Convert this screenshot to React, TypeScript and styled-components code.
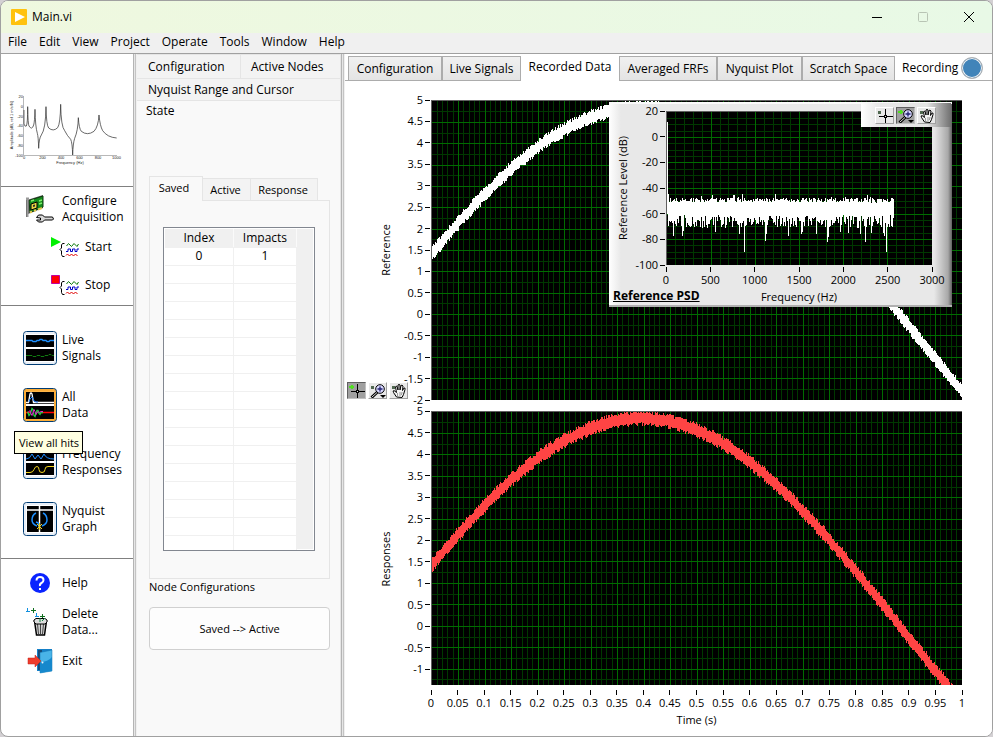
import React from "react";
import styled, { createGlobalStyle, css } from "styled-components";

const GlobalStyle = createGlobalStyle`
  *, *::before, *::after { box-sizing: border-box; }
  body { margin: 0; background: #d3d0d3; color: #000; font: 12px/16px "Open Sans", "Noto Sans", sans-serif; }
  button { font: inherit; color: inherit; padding: 0; margin: 0; border: 0; background: none; }
  svg { display: block; }
`;

/* ---------- window frame ---------- */

const AppWindow = styled.div`
  display: flex;
  flex-direction: column;
  min-height: 100vh;
  border: 1px solid #a0a0a0;
  border-radius: 8px;
  background: #fff;
  overflow: hidden;
`;

const TitleBar = styled.header`
  display: flex;
  align-items: center;
  height: 32px;
  padding-left: 10px;
  background: linear-gradient(90deg, #eff8df, #e8f9e6);
`;

const Title = styled.h1`
  flex: 1;
  margin: 0 0 0 5px;
  font-size: 12px;
  font-weight: 400;
`;

const CaptionButton = styled.button`
  display: grid;
  place-items: center;
  width: 46px;
  height: 32px;
`;

const MenuBar = styled.nav`
  display: flex;
  gap: 12px;
  height: 21px;
  padding: 0 7px 2px;
  background: #f0f0f0;
  border-bottom: 1px solid #a0a0a0;
`;

const Workspace = styled.div`
  display: grid;
  grid-template-columns: 132px 4px 204px 4px minmax(0, 1fr);
  flex: 1;
`;

const Splitter = styled.div`
  background: linear-gradient(90deg, #b4b4b4 1px, #e6e6e6 1px 2px, #c4c4c4 2px 3px, #f0f0f0 3px);
`;

/* ---------- sidebar ---------- */

const Sidebar = styled.aside`
  display: flex;
  flex-direction: column;
  font-size: 12px;
`;

const LogoArea = styled.div`
  height: 133px;
  padding-top: 37px;
  border-bottom: 1px solid #808080;
`;

const SideGroup = styled.div<{ $top: number; $bottom: number; $gap: number }>`
  display: flex;
  flex-direction: column;
  gap: ${(p) => p.$gap}px;
  padding: ${(p) => p.$top}px 0 ${(p) => p.$bottom}px;
  & + & { border-top: 1px solid #808080; }
`;

const SideItem = styled.div<{ $indent?: boolean }>`
  position: relative;
  padding-left: ${(p) => (p.$indent ? 49 : 22)}px;
`;

const SideButton = styled.button<{ $indent?: boolean }>`
  display: grid;
  grid-template-columns: ${(p) => (p.$indent ? "28px" : "34px")} auto;
  align-items: center;
  justify-content: start;
  column-gap: ${(p) => (p.$indent ? 7 : 5)}px;
  min-height: 34px;
  text-align: left;
  white-space: pre;
`;

const IconSlot = styled.span`
  display: grid;
  place-items: center;
`;

const Tooltip = styled.div`
  position: absolute;
  z-index: 2;
  left: 13px;
  top: 43px;
  padding: 3px 3px 2px 4px;
  border: 1px solid #000;
  background: #ffffe1;
  font-size: 11px;
  white-space: nowrap;
`;

/* ---------- state panel ---------- */

const StatePanel = styled.section`
  display: flex;
  flex-direction: column;
  background: #f9f9f9;
  border-right: 1px solid #e5e5e5;
`;

const TabRow = styled.div`
  display: flex;
  background: #f3f3f3;
  border-top: 1px solid #e5e5e5;
`;

const SoftTab = styled.button<{ $w: number; $h: number }>`
  width: ${(p) => p.$w}px;
  height: ${(p) => p.$h}px;
  padding-left: 11px;
  text-align: left;
  white-space: nowrap;
  & + & { border-left: 1px solid #e5e5e5; padding-left: 10px; }
`;

const ActiveSoftTab = styled.button`
  height: 23px;
  padding: 0 0 2px 9px;
  border-top: 1px solid #e5e5e5;
  background: #f9f9f9;
  text-align: left;
`;

const StateBody = styled.div`
  display: flex;
  flex-direction: column;
  padding: 53px 10px 0 12px;
  font-size: 11px;
`;

const SmallTabs = styled.div`
  display: flex;
  align-items: flex-end;
`;

const SmallTab = styled.button<{ $w: number; $active?: boolean }>`
  width: ${(p) => p.$w}px;
  height: 22px;
  border: 1px solid #e5e5e5;
  border-left-width: 0;
  border-bottom: 0;
  padding-right: 2px;
  background: #f3f3f3;
  ${(p) =>
    p.$active &&
    css`
      height: 25px;
      margin-bottom: -1px;
      padding: 0 4px 3px 0;
      border-left-width: 1px;
      background: #f9f9f9;
      position: relative;
    `}
`;

const TableFrame = styled.div`
  height: 379px;
  padding: 26px 14px 0 13px;
  border: 1px solid #e5e5e5;
`;

const TableBox = styled.div`
  display: flex;
  height: 324px;
  padding: 1px;
  border: 1px solid #828790;
  background: #fff;
  overflow: hidden;
`;

const Table = styled.table`
  flex: 1;
  border-collapse: collapse;
  table-layout: fixed;
  font-size: 12px;
  th, td {
    height: 18px;
    padding: 0;
    font-weight: 400;
    line-height: 16px;
    text-align: center;
    border-bottom: 1px solid #f0f0f0;
    border-right: 1px solid #f0f0f0;
  }
  th { background: #f0f0f0; border-right-color: #fafafa; }
`;

const IndexColumn = styled.col`
  width: 52%;
`;

const ScrollTrack = styled.div`
  width: 16px;
  background: #f0f0f0;
`;

const Caption = styled.div`
  height: 28px;
`;

const PushButton = styled.button`
  height: 43px;
  border: 1px solid #d0d0d0;
  border-radius: 4px;
  background: #fdfdfd;
`;

/* ---------- main tabs ---------- */

const DataPanel = styled.main`
  display: flex;
  flex-direction: column;
  min-width: 0;
  background: #fff;
`;

const MainTabs = styled.div`
  display: flex;
  align-items: flex-end;
  height: 27px;
  padding-left: 3px;
  background: linear-gradient(#acacac, #acacac) 0 100% / 100% 1px no-repeat;
`;

const MainTab = styled.button<{ $w: number; $active?: boolean }>`
  width: ${(p) => p.$w}px;
  height: 25px;
  border: 1px solid #acacac;
  background: linear-gradient(#f0f0f0, #e4e4e4);
  white-space: nowrap;
  ${(p) =>
    p.$active &&
    css`
      height: 27px;
      border: 0;
      padding-bottom: 2px;
      background: #fff;
    `}
`;

const RecordingStatus = styled.div`
  display: flex;
  align-items: center;
  gap: 3px;
  height: 27px;
  padding-left: 7px;
`;

const Lamp = styled.span`
  width: 22px;
  height: 22px;
  border: 1px solid #b4b4b4;
  border-radius: 50%;
  background: #4184b9;
  box-shadow: inset 0 0 0 1px #f4f4f4;
`;

/* ---------- plots ---------- */

const PlotArea = styled.div`
  display: grid;
  grid-template-columns: 86px minmax(0, 1fr);
  grid-template-rows: minmax(0, 300fr) 11px minmax(0, 274fr) 51px;
  flex: 1;
  padding: 19px 30px 0 0;
`;

const AxisColumn = styled.div`
  grid-column: 1;
  position: relative;
`;

const AxisSvg = styled.svg`
  width: 100%;
  height: 100%;
  overflow: visible;
  font-size: 11px;
`;

const Palette = styled.div`
  position: absolute;
  left: 2px;
  bottom: 1px;
  display: flex;
  gap: 2px;
`;

const PlotCell = styled.div<{ $row: number }>`
  grid-column: 2;
  grid-row: ${(p) => p.$row};
  position: relative;
  background: #000;
  border-top: 1px solid #606060;
  border-left: 1px solid #606060;
  & > svg { position: absolute; inset: 0; width: 100%; height: 100%; }
`;

const TimeAxis = styled.div`
  grid-column: 2;
  grid-row: 4;
`;

const ToolButton = styled.button<{ $on?: boolean }>`
  width: 19px;
  height: 17px;
  background: ${(p) => (p.$on ? "#a0a0a0" : "#e8e8e8")};
  border: 1px solid;
  border-color: ${(p) => (p.$on ? "#606060 #c0c0c0 #c0c0c0 #606060" : "#fff #a0a0a0 #a0a0a0 #fff")};
`;

const Inset = styled.section`
  position: absolute;
  right: 10px;
  top: 1px;
  width: 343px;
  height: 205px;
  display: grid;
  grid-template-columns: 57px 1fr 20px;
  grid-template-rows: 9px 154px 1fr;
  background: linear-gradient(90deg, #fff, #e8e8e8 12px, #e8e8e8 325px, #a8a8a8 339px, #606060 343px);
  border-bottom: 2px solid #b0b0b0;
  box-shadow: inset 0 2px #fafafa;
`;

const InsetAxis = styled.div`
  grid-column: 1;
  grid-row: 2;
`;

const InsetPlot = styled.div`
  grid-column: 2;
  grid-row: 2;
  position: relative;
  background: #000;
  border-top: 1px solid #606060;
  border-left: 1px solid #606060;
  & > svg { position: absolute; inset: 0; width: 100%; height: 100%; }
`;

const InsetFoot = styled.div`
  grid-column: 2;
  grid-row: 3;
`;

const InsetTitle = styled.h2`
  position: absolute;
  left: 4px;
  bottom: 1px;
  margin: 0;
  font-size: 12px;
  line-height: 16px;
  text-decoration: underline;
`;

const InsetTools = styled.div`
  position: absolute;
  right: 1px;
  top: 1px;
  display: flex;
  gap: 2px;
  width: 90px;
  height: 24px;
  padding: 4px 0 0 14px;
  background: linear-gradient(90deg, #fff, #e8e8e8 16px, #e4e4e4 66px, #707070);
`;

/* ---------- data ---------- */

function makeNoise(seed: number) {
  let s = seed;
  return () => {
    s = (s * 1103515245 + 12345) % 2147483648;
    return s / 2147483648;
  };
}

const SAMPLES = 530;

function bandPath(seed: number, yMin: number, yMax: number, height: number) {
  const noise = makeNoise(seed);
  const toY = (v: number) => ((yMax - v) / (yMax - yMin)) * height;
  const signal = (t: number) => 4.85 * Math.cos(3.22 * (t - 0.395));
  let d = "";
  for (let i = 0; i < SAMPLES; i++) {
    const a = signal(i / SAMPLES);
    const b = signal((i + 1) / SAMPLES);
    const top = toY(Math.max(a, b) + 0.09 + noise() * 0.09);
    const bottom = toY(Math.min(a, b) - 0.09 - noise() * 0.09);
    d += `M${i} ${top.toFixed(1)}h1V${bottom.toFixed(1)}h-1z`;
  }
  return d;
}

const DIPS: Record<number, number> = {
  6: 77, 15: 77, 16: 73, 48: 74, 72: 76, 77: 90, 98: 81, 99: 76, 121: 77, 135: 76, 136: 74,
  150: 76, 161: 82, 162: 78, 174: 74, 182: 75, 194: 76, 199: 82, 205: 75, 217: 75, 218: 77, 220: 90,
};

function psdPath() {
  const noise = makeNoise(77);
  const toY = (v: number) => ((20 - v) / 120) * 153;
  let d = `M0 ${toY(12)}h1V${toY(-60)}h-1zM1 ${toY(-44)}h1V${toY(-66)}h-1z`;
  for (let i = 1; i < 228; i++) {
    const n = noise();
    const top = -47 - noise() * 4 + (n > 0.93 ? 3 : 0);
    const low = noise();
    const bottom = DIPS[i] ? -DIPS[i] : -61 - low * 10;
    d += `M${i} ${toY(top).toFixed(1)}h1V${toY(bottom).toFixed(1)}h-1z`;
  }
  return d;
}

const refBand = bandPath(11, -2, 5, 299);
const respBand = bandPath(29, -1.37, 5, 273);
const psdBand = psdPath();

const range = (from: number, to: number, step: number) =>
  Array.from({ length: Math.round((to - from) / step) + 1 }, (_, i) => Number((from + i * step).toFixed(4)));

/* ---------- chart parts ---------- */

type Scale = { min: number; max: number };
const pct = (v: number) => `${v.toFixed(3)}%`;
const along = (v: number, s: Scale) => ((v - s.min) / (s.max - s.min)) * 100;

function Grid({ x, y, xStep, yStep, xMinor, yMinor }: { x: Scale; y: Scale; xStep: number; yStep: number; xMinor: number; yMinor: number }) {
  const isMajor = (v: number, step: number) => Math.abs(v / step - Math.round(v / step)) < 0.01;
  const firstY = Math.ceil(y.min / yMinor) * yMinor;
  const xs = range(x.min, x.max, xMinor);
  const ys = range(firstY, y.max, yMinor);
  const layer = (major: boolean) => (
    <g stroke={major ? "#006c00" : "#003800"}>
      {xs.filter((v) => isMajor(v, xStep) === major && v > x.min && v < x.max).map((v) => (
        <line key={`x${v}`} x1={pct(along(v, x))} x2={pct(along(v, x))} y1="0" y2="100%" />
      ))}
      {ys.filter((v) => isMajor(v, yStep) === major && v < y.max && v > y.min).map((v) => (
        <line key={`y${v}`} y1={pct(100 - along(v, y))} y2={pct(100 - along(v, y))} x1="0" x2="100%" />
      ))}
    </g>
  );
  return (
    <svg shapeRendering="crispEdges">
      {layer(false)}
      {layer(true)}
    </svg>
  );
}

function Trace({ d, color, w, h }: { d: string; color: string; w: number; h: number }) {
  return (
    <svg viewBox={`0 0 ${w} ${h}`} preserveAspectRatio="none" shapeRendering="crispEdges">
      <path d={d} fill={color} />
    </svg>
  );
}

function ValueAxis({ values, scale, width, label, labelX, labelY }: { values: number[]; scale: Scale; width: number; label: string; labelX: number; labelY: string }) {
  return (
    <AxisSvg>
      {values.map((v) => {
        const y = pct(100 - along(v, scale));
        return (
          <g key={v}>
            <line x1={width - 6} x2={width - 1} y1={y} y2={y} stroke="#000" shapeRendering="crispEdges" />
            <text x={width - 8} y={y} dy="4" textAnchor="end">{v}</text>
          </g>
        );
      })}
      <svg x={labelX} y={labelY} overflow="visible">
        <text transform="rotate(-90)" textAnchor="middle">{label}</text>
      </svg>
    </AxisSvg>
  );
}

function BottomAxis({ values, scale, tickTop, textY, label, labelX, labelY }: { values: number[]; scale: Scale; tickTop: number; textY: number; label: string; labelX: string; labelY: number }) {
  return (
    <AxisSvg>
      {values.map((v) => {
        const x = pct(along(v, scale));
        return (
          <g key={v}>
            <line x1={x} x2={x} y1={tickTop} y2={tickTop + 5} stroke="#000" shapeRendering="crispEdges" />
            <text x={x} y={textY} textAnchor="middle">{v}</text>
          </g>
        );
      })}
      <text x={labelX} y={labelY} textAnchor="middle">{label}</text>
    </AxisSvg>
  );
}

/* ---------- icons ---------- */

const CursorIcon = ({ on }: { on?: boolean }) => (
  <svg width="17" height="15" shapeRendering="crispEdges">
    <path d={on ? "M1 3h5v2h-5zM3 2h2v4h-2z" : "M2 3h3v3h-3z"} fill={on ? "#50e020" : "#506850"} />
    <path d="M9.500 1v14M3 8.500h14" stroke="#000" fill="none" />
    <path d="M8 7h3v3h-3z" fill="#000" />
    <path d="M9 8h1v1h-1z" fill="#ddd" />
  </svg>
);

const ZoomIcon = ({ on }: { on?: boolean }) => (
  <svg width="17" height="15">
    <path d={on ? "M1 3h5v2h-5zM3 2h2v4h-2z" : "M2 3h3v3h-3z"} fill={on ? "#50e020" : "#506850"} />
    <path d="M8.500 9L2.500 14.500" stroke="#000" strokeWidth="3" />
    <path d="M8 9.500L3 14" stroke="#ddd" />
    <circle cx="11" cy="6" r="4.300" fill="#d8d8ff" stroke="#000" />
    <path d="M8.500 6h5M11 3.500v5" stroke="#202070" strokeWidth="1.300" />
    <path d="M11 12h6l-3 3z" fill="#000" />
  </svg>
);

const HandIcon = () => (
  <svg width="17" height="15">
    <path d="M2 3h3v3h-3z" fill="#506850" />
    <path
      d="M6.500 14L3.500 9.500Q2.500 7.500 4 7.500L6.500 9.500L5.500 4Q6 2.500 7 3.500L8 7V2Q9 .800 10 2V7L11 2.500Q12 1.500 13 3L12.500 7.500L14 5Q15.500 4.500 15 6.500L13.500 11.500L12 14.500z"
      fill="#f4f4f4" stroke="#000" strokeWidth="1"
    />
    <path d="M7.500 10v3M10 9v4M12 9l-.500 3" stroke="#999" />
  </svg>
);

const AppIcon = () => (
  <svg width="16" height="16">
    <rect width="16" height="16" rx="1" fill="#ffc20e" />
    <path d="M4 3v10l10-5z" fill="#fff" />
  </svg>
);

const BoardIcon = () => (
  <svg width="30" height="28" viewBox="0 0 30 28">
    <path d="M2 5L18 0V13L3 19V22H1V4z" fill="#555" />
    <path d="M4 5.500L18 1V12L5 17.500z" fill="#158a1c" stroke="#103b10" />
    <path d="M1 3.500h3M2.500 4v18" stroke="#999" strokeWidth="2" />
    <path d="M6 9l6-2v6l-6 2z" fill="#e5d340" stroke="#000" />
    <path d="M8 10l2-.500v2l-2 .500z" fill="#333" />
    <path d="M14 6l3-1M14 9l3-1M6 6l3-1" stroke="#7ef06a" strokeWidth="1.500" />
    <path d="M5 17.500l2-1M9 16l2-1M13 14.500l4-1.500" stroke="#e0c850" strokeWidth="2" />
    <path d="M11.500 22.500l2-2.500h4l2 2h8l1 2-1 1h-8l-2 2h-4l-2-2h4v-2z" fill="#d8d8d8" stroke="#000" />
  </svg>
);

const WaveBundle = () => (
  <>
    <path d="M14.500 6.500H12.500L11.500 8V11L10 12.500L11.500 14V17.500L12.500 19.500H14.500" fill="none" stroke="#000" />
    <path d="M16.500 9l2-2.500 3 3 2.500-3 3 3 1.500-2.500" fill="none" stroke="#087808" />
    <path d="M16 14.500h2v-2.500h2.500v2.500h2v-2.500h2.500v2.500h2v-2.500h2" fill="none" stroke="#0000c8" />
    <path d="M16 18.500l1.500-1.500 2 2 2-2 2 2 2-2 2 2" fill="none" stroke="#e00000" />
  </>
);

const StartIcon = () => (
  <svg width="30" height="21">
    <path d="M1 0l10 5-10 5z" fill="#00f000" />
    <WaveBundle />
  </svg>
);

const StopIcon = () => (
  <svg width="30" height="21">
    <path d="M1.500.500h8v8h-8z" fill="#f00" stroke="#c000a0" />
    <WaveBundle />
  </svg>
);

function ScreenIcon({ hot, children }: { hot?: boolean; children: React.ReactNode }) {
  return (
    <svg width="34" height="34">
      <rect x=".5" y=".5" width="33" height="33" rx="3" fill={hot ? "#ffb648" : "#fff"} stroke="#003c74" />
      <rect x="2" y="2" width="30" height="30" rx="1" fill="none" stroke={hot ? "#f5a32a" : "#d4e0f0"} />
      {children}
    </svg>
  );
}

const LiveIcon = () => (
  <ScreenIcon>
    <path d="M3 4h28v12H3zM3 18h28v12H3z" fill="#000" />
    <path d="M3 9.500h6l1 1h3l1-1h2l1-1h2l1 1h3l1 1h2l1-1h4" fill="none" stroke="#1e90ff" strokeWidth="1.300" />
    <path d="M3 24.500h6l1 1h3l1-1h3l1 1h3l1-1h3l1-1h2l1 1h2" fill="none" stroke="#107a10" />
  </ScreenIcon>
);

const AllDataIcon = () => (
  <ScreenIcon hot>
    <path d="M3 4h28v12H3zM3 18h28v13H3z" fill="#000" />
    <path d="M3 14.500h2.500L7 6q1-2 2 0l1.500 8.500H31" fill="none" stroke="#fff" strokeWidth="1.300" />
    <path d="M6 14l1-3 2-2 2 4 2 1h2" fill="none" stroke="#2080ff" />
    <path d="M3 24.500h4M18 24.500h13" stroke="#f00" strokeWidth="1.500" />
    <path d="M4 24.500h1l1 3 1-1 2-6 1 1 1 6 1 1 2-6h1l1 3 1 1 1-2h2" fill="none" stroke="#20d040" strokeWidth="1.300" />
    <path d="M5 24.500l2-2 1 3 1 2 2-6 1 2 1 3 2-3 1 1 2-1h2" fill="none" stroke="#e020d0" />
    <path d="M3 17h28" stroke="#fff" strokeWidth="2" />
  </ScreenIcon>
);

const FrequencyIcon = () => (
  <ScreenIcon>
    <path d="M3 3h28v13H3zM3 18h28v12H3z" fill="#000" />
    <path d="M3 14q4 0 6-5l3 5 3-4 3 4 3-5q2 5 10 5" fill="none" stroke="#1e90ff" />
    <path d="M3 27.500h4q3 0 4-3t3-3 2 3 3 3 3-3 3-3h6" fill="none" stroke="#f4d420" />
  </ScreenIcon>
);

const NyquistIcon = () => (
  <ScreenIcon>
    <path d="M4 4h26v26H4z" fill="#000" />
    <path d="M4 8h26M16.500 4v26" stroke="#fff" strokeWidth="1.500" />
    <path d="M13 11q-4 2-4 7 0 4 5 6M20 11q4 2 4 7 0 4-5 6M13 20q4 1 3 5" fill="none" stroke="#1e90ff" strokeWidth="1.500" />
    <path d="M14 22l5 5M19 22l-5 5M16.500 21v7" stroke="#f4d420" />
  </ScreenIcon>
);

const HelpIcon = () => (
  <svg width="22" height="22">
    <circle cx="11" cy="11" r="10" fill="#0a24ff" />
    <path d="M7.500 8.500q0-3.500 3.500-3.500t3.500 3q0 2-2 3T11 14" fill="none" stroke="#fff" strokeWidth="2" />
    <path d="M10 16h2v2h-2z" fill="#fff" />
  </svg>
);

const DeleteIcon = () => (
  <svg width="28" height="30">
    <path d="M1.500 1v4M0 4.500h4M10.500 6v4M9 9.500h4M14.500 14v4M12 16.500h4" stroke="#1090e0" />
    <path d="M5 3.500h5M7.500 1v5M14 9.500h5M16.500 7v5M15 14.500h4" stroke="#107020" />
    <path d="M8.500 14l2 14h8l2-14z" fill="#d0d0d0" stroke="#000" strokeWidth="1.500" />
    <path d="M11.500 17l1 10M14.500 17v10M17.500 17l-1 10" stroke="#444" />
    <path d="M8 13l2-1.500h9l2 1.500v2l-2 2h-9l-2-2z" fill="#ddd" stroke="#000" />
    <path d="M14 11v4M16 14l3-3" stroke="#108040" />
  </svg>
);

const ExitIcon = () => (
  <svg width="26" height="26">
    <path d="M10 1h15v22H10z" fill="#1580c8" />
    <path d="M11 2h4v20h-4z" fill="#174c78" />
    <path d="M13 4.500L25 2V23l-12 2z" fill="#49b4e8" stroke="#1270ac" strokeWidth=".5" />
    <path d="M13 14q8 0 12-5v14l-12 2z" fill="#1688cc" />
    <path d="M1 10h7V7l6 6-6 6v-3H1z" fill="#ef3c2b" stroke="#c02018" strokeWidth=".5" />
    <circle cx="15.500" cy="14.500" r="1" fill="#e8f4fc" />
  </svg>
);

const LogoChart = () => (
  <svg width="131" height="74" viewBox="1 91 131 74" fontSize="4" fontFamily="Liberation Sans, sans-serif" fill="#222">
    <path d="M23.500 96v59.500H117" fill="none" stroke="#999" strokeWidth=".7" />
    <path
      transform="scale(.33333)"
      d="M72 330V372Q75 382 79 378Q83 372 83 320Q84 374 87 378Q96 392 101 375Q104 366 105 328Q106 380 112 400Q115 410 116 445Q117 415 124 405Q137 388 138 320Q139 376 146 384Q160 396 173 383Q181 372 182 313Q183 380 194 392Q202 408 212 418Q217 428 218 465Q219 430 224 415Q234 392 235 353Q237 386 244 394Q262 408 282 394Q295 380 297 345Q300 378 308 392Q322 412 350 414"
      fill="none" stroke="#333" strokeWidth="2.200"
    />
    {[20, 0, -20, -40, -60, -80, -100].map((v, i) => (
      <text key={v} x="23" y={98 + i * 9.8} textAnchor="end">{v}</text>
    ))}
    {[0, 200, 400, 600, 800, 1000].map((v, i) => (
      <text key={v} x={24 + i * 18.5} y="159" textAnchor="middle">{v}</text>
    ))}
    <text x="70" y="164" textAnchor="middle">Frequency (Hz)</text>
    <text transform="translate(13 125) rotate(-90)" textAnchor="middle">Amplitude (dB, ref 1 m/s/N)</text>
  </svg>
);

/* ---------- page ---------- */

const menuItems = ["File", "Edit", "View", "Project", "Operate", "Tools", "Window", "Help"];

const MenuItem = styled.button`
  display: block;
`;

type SideEntry = { label: string; icon: React.ReactNode; indent?: boolean; tip?: string };
type SideBlock = { top: number; bottom: number; gap: number; items: SideEntry[] };

const sideBlocks: SideBlock[] = [
  {
    top: 5, bottom: 3, gap: 4,
    items: [
      { label: "Configure\nAcquisition", icon: <BoardIcon /> },
      { label: "Start", icon: <StartIcon />, indent: true },
      { label: "Stop", icon: <StopIcon />, indent: true },
    ],
  },
  {
    top: 25, bottom: 22, gap: 23,
    items: [
      { label: "Live\nSignals", icon: <LiveIcon /> },
      { label: "All\nData", icon: <AllDataIcon />, tip: "View all hits" },
      { label: "Frequency\nResponses", icon: <FrequencyIcon /> },
      { label: "Nyquist\nGraph", icon: <NyquistIcon /> },
    ],
  },
  {
    top: 7, bottom: 0, gap: 5,
    items: [
      { label: "Help", icon: <HelpIcon /> },
      { label: "Delete\nData...", icon: <DeleteIcon /> },
      { label: "Exit", icon: <ExitIcon /> },
    ],
  },
];

const timeScale = { min: 0, max: 1 };
const refScale = { min: -2, max: 5 };
const respScale = { min: -1.37, max: 5 };
const freqScale = { min: 0, max: 3000 };
const levelScale = { min: -100, max: 20 };

export default function App() {
  return (
    <>
      <GlobalStyle />
      <AppWindow>
        <TitleBar>
          <AppIcon />
          <Title>Main.vi</Title>
          <CaptionButton aria-label="Minimize">
            <svg width="10" height="10" shapeRendering="crispEdges"><path d="M0 5.500h10" stroke="#000" /></svg>
          </CaptionButton>
          <CaptionButton aria-label="Maximize" disabled>
            <svg width="10" height="10"><rect x=".5" y=".5" width="9" height="9" rx="1" fill="none" stroke="#b8c4b4" /></svg>
          </CaptionButton>
          <CaptionButton aria-label="Close">
            <svg width="10" height="10"><path d="M0 0l10 10M10 0L0 10" stroke="#000" /></svg>
          </CaptionButton>
        </TitleBar>
        <MenuBar>
          {menuItems.map((m) => <MenuItem key={m}>{m}</MenuItem>)}
        </MenuBar>
        <Workspace>
          <Sidebar>
            <LogoArea><LogoChart /></LogoArea>
            {sideBlocks.map((b, i) => (
              <SideGroup key={i} $top={b.top} $bottom={b.bottom} $gap={b.gap}>
                {b.items.map((it) => (
                  <SideItem key={it.label} $indent={it.indent}>
                    <SideButton $indent={it.indent}>
                      <IconSlot>{it.icon}</IconSlot>
                      {it.label}
                    </SideButton>
                    {it.tip && <Tooltip role="tooltip">{it.tip}</Tooltip>}
                  </SideItem>
                ))}
              </SideGroup>
            ))}
          </Sidebar>
          <Splitter />
          <StatePanel>
            <TabRow>
              <SoftTab $w={103} $h={23}>Configuration</SoftTab>
              <SoftTab $w={100} $h={23}>Active Nodes</SoftTab>
            </TabRow>
            <TabRow><SoftTab $w={203} $h={21}>Nyquist Range and Cursor</SoftTab></TabRow>
            <ActiveSoftTab>State</ActiveSoftTab>
            <StateBody>
              <SmallTabs>
                <SmallTab $w={54} $active>Saved</SmallTab>
                <SmallTab $w={48}>Active</SmallTab>
                <SmallTab $w={67}>Response</SmallTab>
              </SmallTabs>
              <TableFrame>
                <TableBox>
                  <Table>
                    <colgroup><IndexColumn /><col /></colgroup>
                    <thead><tr><th>Index</th><th>Impacts</th></tr></thead>
                    <tbody>
                      <tr><td>0</td><td>1</td></tr>
                      {range(1, 16, 1).map((r) => <tr key={r}><td /><td /></tr>)}
                    </tbody>
                  </Table>
                  <ScrollTrack />
                </TableBox>
              </TableFrame>
              <Caption>Node Configurations</Caption>
              <PushButton>{"Saved --> Active"}</PushButton>
            </StateBody>
          </StatePanel>
          <Splitter />
          <DataPanel>
            <MainTabs>
              <MainTab $w={94}>Configuration</MainTab>
              <MainTab $w={79}>Live Signals</MainTab>
              <MainTab $w={98} $active>Recorded Data</MainTab>
              <MainTab $w={98}>Averaged FRFs</MainTab>
              <MainTab $w={85}>Nyquist Plot</MainTab>
              <MainTab $w={93}>Scratch Space</MainTab>
              <RecordingStatus>Recording<Lamp /></RecordingStatus>
            </MainTabs>
            <PlotArea>
              <AxisColumn>
                <ValueAxis values={range(-2, 5, 0.5)} scale={refScale} width={86} label="Reference" labelX={45} labelY="50%" />
                <Palette>
                  <ToolButton $on aria-label="Cursor"><CursorIcon on /></ToolButton>
                  <ToolButton aria-label="Zoom"><ZoomIcon /></ToolButton>
                  <ToolButton aria-label="Pan"><HandIcon /></ToolButton>
                </Palette>
              </AxisColumn>
              <PlotCell $row={1}>
                <Grid x={timeScale} y={refScale} xStep={0.05} yStep={0.5} xMinor={0.01} yMinor={0.25} />
                <Trace d={refBand} color="#fff" w={SAMPLES} h={299} />
                <Inset>
                  <InsetAxis>
                    <ValueAxis values={range(-100, 20, 20)} scale={levelScale} width={57} label="Reference Level (dB)" labelX={18} labelY="50%" />
                  </InsetAxis>
                  <InsetPlot>
                    <Grid x={freqScale} y={levelScale} xStep={500} yStep={20} xMinor={100} yMinor={5} />
                    <Trace d={psdBand} color="#fff" w={266} h={153} />
                  </InsetPlot>
                  <InsetFoot>
                    <BottomAxis values={range(0, 3000, 500)} scale={freqScale} tickTop={2} textY={19} label="Frequency (Hz)" labelX="50%" labelY={36} />
                  </InsetFoot>
                  <InsetTitle>Reference PSD</InsetTitle>
                  <InsetTools>
                    <ToolButton aria-label="Cursor"><CursorIcon /></ToolButton>
                    <ToolButton $on aria-label="Zoom"><ZoomIcon on /></ToolButton>
                    <ToolButton aria-label="Pan"><HandIcon /></ToolButton>
                  </InsetTools>
                </Inset>
              </PlotCell>
              <AxisColumn />
              <PlotCell $row={3}>
                <Grid x={timeScale} y={respScale} xStep={0.05} yStep={0.5} xMinor={0.01} yMinor={0.25} />
                <Trace d={respBand} color="#ff4444" w={SAMPLES} h={273} />
              </PlotCell>
              <AxisColumn>
                <ValueAxis values={range(-1, 5, 0.5)} scale={respScale} width={86} label="Responses" labelX={45} labelY="54%" />
              </AxisColumn>
              <TimeAxis>
                <BottomAxis values={range(0, 1, 0.05)} scale={timeScale} tickTop={5} textY={22} label="Time (s)" labelX="50%" labelY={39} />
              </TimeAxis>
            </PlotArea>
          </DataPanel>
        </Workspace>
      </AppWindow>
    </>
  );
}
